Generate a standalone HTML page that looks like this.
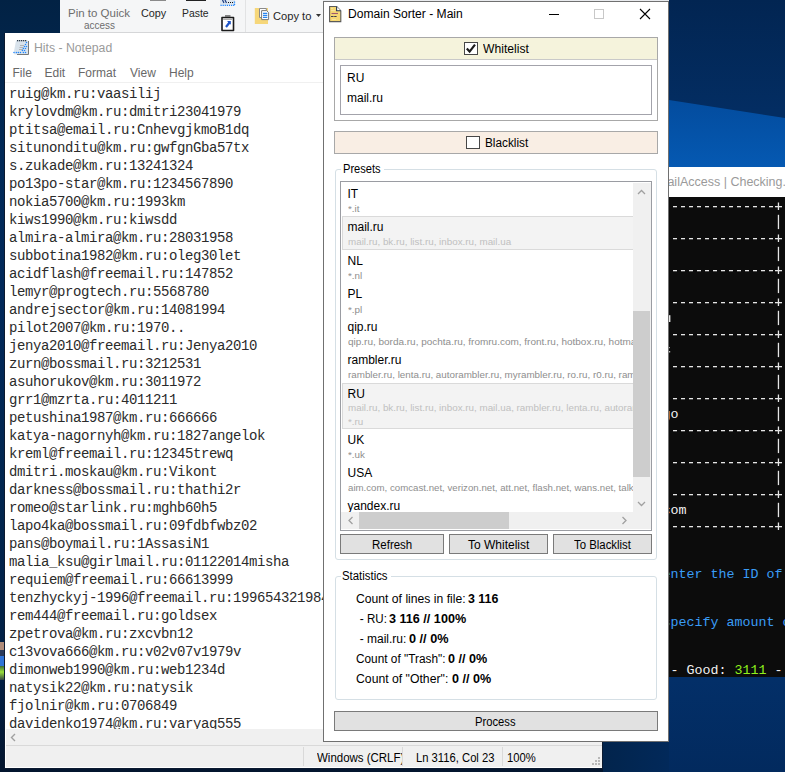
<!DOCTYPE html>
<html><head><meta charset="utf-8">
<style>
*{margin:0;padding:0;box-sizing:border-box}
html,body{width:785px;height:772px;overflow:hidden}
body{position:relative;background:linear-gradient(90deg,rgba(0,0,0,0) 0,rgba(0,0,0,0) 100%),linear-gradient(#022244 0,#022a58 150px,#02295a 300px,#02264f 500px,#021f44 680px,#03152e 772px);font-family:"Liberation Sans",sans-serif;font-size:12px;color:#000}
.a{position:absolute}
.t{position:absolute;white-space:nowrap;line-height:1}
.mono{font-family:"Liberation Mono",monospace}
#deskR{left:669px;top:0;width:116px;height:772px;background:linear-gradient(#022552 0,#032d62 110px,#032d62 170px,#032f68 680px,#022a5e 772px)}
#band{left:669px;top:100px;width:116px;height:67px;background:linear-gradient(#034c9e,#0559b2);clip-path:polygon(0 0,100% 18px,100% 100%,0 100%)}
#ribbon{left:60px;top:0;width:263px;height:33px;background:#f5f6f7;border-bottom:1px solid #d5d6d8}
#np{left:4px;top:33px;width:599px;height:736px;background:#fff;border:1px solid #0c1a30;border-top:none}
#npText{left:9px;top:85px;font-size:14px;letter-spacing:-0.4px;line-height:18px;white-space:pre;color:#2b2b2b}
#npScroll{left:6px;top:729px;width:596px;height:16px;background:#f0f0f0}
#npStatus{left:6px;top:745px;width:596px;height:22px;background:#f0f0f0;border-top:1px solid #d9d9d9}
#ds{left:323px;top:1px;width:346px;height:741px;background:#fff;border:1px solid #707070}
.cb{position:absolute;width:14px;height:13px;border:1px solid #474747;background:#fff}
.btn{position:absolute;background:#e1e1e1;border:1px solid #7a7a7a}
.gb{position:absolute;border:1px solid #d5dfe5;border-radius:3px}
.gbl{position:absolute;background:#fff;width:auto;height:12px}
.sub{color:#a6a6a6;font-size:10px}
.con{font-size:13.33px;line-height:16px;white-space:pre}
</style></head><body>
<div class="a" id="deskR"></div>
<div class="a" style="left:603px;top:700px;width:66px;height:72px;background:linear-gradient(90deg,#02244c,#02295a)"></div>
<div class="a" id="band"></div>
<div class="a" style="left:0;top:642px;width:4px;height:38px;background:linear-gradient(#b08c7a 0,#b08c7a 8px,#2a3a5a 8px,#2a3a5a 14px,#2f74d8 14px,#2f74d8 24px,#3a6a3a 24px,#9adf3a 30px,#344 38px)"></div>
<div class="a" id="ribbon"></div>
<div class="t" style="left:67.56px;top:8px;font-size:11px;transform:scaleX(1.0448);transform-origin:0 0;color:#6d6d6d">Pin to Quick</div>
<div class="t" style="left:83.90px;top:20.4px;font-size:11px;transform:scaleX(0.9029);transform-origin:0 0;color:#6d6d6d">access</div>
<div class="t" style="left:140.50px;top:8px;font-size:11px;transform:scaleX(0.9846);transform-origin:0 0;color:#262626">Copy</div>
<div class="t" style="left:181.86px;top:8px;font-size:11px;transform:scaleX(0.9444);transform-origin:0 0;color:#262626">Paste</div>
<div class="t" style="left:272.70px;top:11.2px;font-size:11px;transform:scaleX(1.0132);transform-origin:0 0;color:#262626">Copy to</div>
<div class="a" style="left:150px;top:0;width:16px;height:1px;background:#8a8a8a"></div>
<div class="a" style="left:186px;top:0;width:20px;height:1px;background:#222"></div>
<svg class="a" style="left:219px;top:0" width="18" height="8"><rect x="1" y="0" width="15" height="5" fill="#dde6ef"/><path d="M1.5 5.3 H15.5" stroke="#1f86ff" stroke-width="1.3" stroke-dasharray="1.2 0.9"/><path d="M15.5 1.5 V5" stroke="#1f86ff" stroke-width="1.3" stroke-dasharray="1.2 1"/><path d="M3.5 0 L5 3 M6 0 L7.5 3" stroke="#1a3a80" stroke-width="1.2"/><path d="M9 2.5 H14" stroke="#111" stroke-width="1.2" stroke-dasharray="1 1"/></svg>
<svg class="a" style="left:219px;top:13px" width="18" height="20"><path d="M3 4.5 H14.5 V17.5 H3 Z" fill="#fff" stroke="#1a1a1a" stroke-width="1.6" stroke-linejoin="round"/><rect x="6" y="2.2" width="5.5" height="1.6" fill="#666"/><path d="M4.2 6.3 H13" stroke="#9a9a9a" stroke-width="1"/><path d="M7 14 L10.5 9.5" stroke="#1f55c8" stroke-width="2.2"/><path d="M8 8 H11.8 V11.8 Z" fill="#1f55c8"/></svg>
<div class="a" style="left:245px;top:0;width:1px;height:32px;background:#e2e3e4"></div>
<svg class="a" style="left:254px;top:7px" width="16" height="18"><rect x="0.8" y="1" width="13.2" height="16" fill="#f6d77a"/><path d="M5.5 1.5 H12.3 V10.5 H5.5 Z" fill="#fff" stroke="#8a8a8a" stroke-width="1"/><path d="M7.6 3.6 H12.6 L14.6 5.6 V12.6 H7.6 Z" fill="#fff" stroke="#7a7a7a" stroke-width="1"/><path d="M9 6.3h4.3M9 8.4h4.3M9 10.4h4.3" stroke="#2a86f0" stroke-width="1.2"/></svg>
<svg class="a" style="left:316px;top:14px" width="6" height="4"><path d="M0 0H5L2.5 3Z" fill="#333"/></svg>
<div class="a" id="np"></div>
<svg class="a" style="left:12px;top:38px" width="19" height="19"><path d="M4 2.5 H16.5 V16.5 H2.5 L1.8 14.5 Z" fill="#d9e3ec"/><path d="M16.5 3 V16.5 H5" stroke="#6b6b6b" stroke-width="0.9" fill="none"/><g fill="#2c3a48"><rect x="5" y="2" width="1.3" height="1.3"/><rect x="7" y="2" width="1.3" height="1.3"/><rect x="9" y="2" width="1.3" height="1.3"/><rect x="11" y="2" width="1.3" height="1.3"/><rect x="13" y="2" width="1.3" height="1.3"/></g><path d="M8 7.5h4M7.5 9.5h4M7 11.5h4" stroke="#a8a8a8" stroke-width="0.8"/><g fill="#1f86ff"><circle cx="14.5" cy="4.5" r="0.75"/><circle cx="13.5" cy="6.4" r="0.75"/><circle cx="12.5" cy="8.4" r="0.75"/><circle cx="14.5" cy="8.4" r="0.75"/><circle cx="11.4" cy="10.4" r="0.75"/><circle cx="13.5" cy="10.4" r="0.75"/><circle cx="10.4" cy="12.4" r="0.75"/><circle cx="12.5" cy="12.4" r="0.75"/><circle cx="2" cy="14.4" r="0.75"/><circle cx="4.4" cy="14.4" r="0.75"/><circle cx="6.4" cy="14.4" r="0.75"/><circle cx="8.5" cy="14.4" r="0.75"/><circle cx="11.4" cy="14.4" r="0.75"/><circle cx="13.5" cy="14.4" r="0.75"/></g></svg>
<div class="t" style="left:33.88px;top:41.7px;font-size:12px;transform:scaleX(1.0200);transform-origin:0 0;color:#9a9a9a">Hits - Notepad</div>
<div class="t" style="left:12.5px;top:66.7px;color:#686868">File</div>
<div class="t" style="left:44.5px;top:66.7px;color:#686868">Edit</div>
<div class="t" style="left:78px;top:66.7px;color:#686868">Format</div>
<div class="t" style="left:130px;top:66.7px;color:#686868">View</div>
<div class="t" style="left:169px;top:66.7px;color:#686868">Help</div>
<div class="a" style="left:5px;top:82px;width:597px;height:1px;background:#f0f0f0"></div>
<div class="a mono" id="npText">ruig@km.ru:vaasilij
krylovdm@km.ru:dmitri23041979
ptitsa@email.ru:CnhevgjkmoB1dq
situnonditu@km.ru:gwfgnGba57tx
s.zukade@km.ru:13241324
po13po-star@km.ru:1234567890
nokia5700@km.ru:1993km
kiws1990@km.ru:kiwsdd
almira-almira@km.ru:28031958
subbotina1982@km.ru:oleg30let
acidflash@freemail.ru:147852
lemyr@progtech.ru:5568780
andrejsector@km.ru:14081994
pilot2007@km.ru:1970..
jenya2010@freemail.ru:Jenya2010
zurn@bossmail.ru:3212531
asuhorukov@km.ru:3011972
grr1@mzrta.ru:4011211
petushina1987@km.ru:666666
katya-nagornyh@km.ru:1827angelok
kreml@freemail.ru:12345trewq
dmitri.moskau@km.ru:Vikont
darkness@bossmail.ru:thathi2r
romeo@starlink.ru:mghb60h5
lapo4ka@bossmail.ru:09fdbfwbz02
pans@boymail.ru:1AssasiN1
malia_ksu@girlmail.ru:01122014misha
requiem@freemail.ru:66613999
tenzhyckyj-1996@freemail.ru:199654321984
rem444@freemail.ru:goldsex
zpetrova@km.ru:zxcvbn12
c13vova666@km.ru:v02v07v1979v
dimonweb1990@km.ru:web1234d
natysik22@km.ru:natysik
fjolnir@km.ru:0706849
davidenko1974@km.ru:varyag555</div>
<div class="a" id="npScroll"></div>
<svg class="a" style="left:10px;top:733px" width="7" height="9"><path d="M5 1 L1.5 4.5 L5 8" stroke="#a0a0a0" stroke-width="1.4" fill="none"/></svg>
<div class="a" id="npStatus"></div>
<div class="a" style="left:303px;top:747px;width:1px;height:19px;background:#d9d9d9"></div>
<div class="a" style="left:402px;top:747px;width:1px;height:19px;background:#d9d9d9"></div>
<div class="a" style="left:502px;top:747px;width:1px;height:19px;background:#d9d9d9"></div>
<div class="t" style="left:317.10px;top:751.7px;font-size:12px;transform:scaleX(0.9560);transform-origin:0 0;">Windows (CRLF)</div>
<div class="a" style="left:402px;top:746px;width:12px;height:21px;background:#f0f0f0"></div>
<div class="a" style="left:402px;top:747px;width:1px;height:19px;background:#d9d9d9"></div>
<div class="t" style="left:415.66px;top:751.7px;font-size:12px;transform:scaleX(0.9361);transform-origin:0 0;">Ln 3116, Col 23</div>
<div class="t" style="left:506.56px;top:751.7px;font-size:12px;transform:scaleX(0.9379);transform-origin:0 0;">100%</div>
<svg class="a" style="left:591px;top:756px" width="10" height="10"><g fill="#b8b8b8"><rect x="7" y="1" width="2" height="2"/><rect x="4" y="4" width="2" height="2"/><rect x="7" y="4" width="2" height="2"/><rect x="1" y="7" width="2" height="2"/><rect x="4" y="7" width="2" height="2"/><rect x="7" y="7" width="2" height="2"/></g></svg>
<div class="a" style="left:323px;top:0;width:346px;height:1px;background:#e9ebee"></div>
<div class="a" id="ds"></div>
<svg class="a" style="left:328px;top:5px" width="15" height="18"><path d="M1.6 1.5 H8.6 L12.8 5.7 V16.6 H1.6 Z" fill="#f6d872" stroke="#5a5a5a" stroke-width="1.1"/><path d="M8.6 1.5 V5.7 H12.8" fill="#fff" stroke="#2a3a50" stroke-width="1.1"/><g fill="#fff" opacity="0.8"><circle cx="4" cy="3.5" r="0.5"/><circle cx="4" cy="5.5" r="0.5"/><circle cx="6" cy="5.5" r="0.5"/><circle cx="5" cy="14.5" r="0.5"/><circle cx="7" cy="14.5" r="0.5"/></g><path d="M3.5 8.5h6.5" stroke="#a05a70" stroke-width="1.1"/><path d="M3 11.5h2.6M6.2 11.5h2.4" stroke="#3a3a50" stroke-width="1"/></svg>
<div class="t" style="left:347.59px;top:7.800000000000001px;font-size:12px;transform:scaleX(1.0063);transform-origin:0 0;">Domain Sorter - Main</div>
<div class="a" style="left:549px;top:14px;width:10px;height:1px;background:#000"></div>
<div class="a" style="left:594px;top:9px;width:10px;height:10px;border:1px solid #c8c8c8"></div>
<svg class="a" style="left:639px;top:8px" width="12" height="12"><path d="M1 1L11 11M11 1L1 11" stroke="#000" stroke-width="1.1"/></svg>
<div class="a" style="left:334px;top:37px;width:324px;height:84px;border:1px solid #a8a8a8;background:#fff"></div>
<div class="a" style="left:335px;top:38px;width:322px;height:22px;background:#f5f3dc;border-bottom:1px solid #c9c9c9"></div>
<div class="cb" style="left:464px;top:42px"></div>
<svg class="a" style="left:465px;top:43px" width="12" height="11"><path d="M1.8 5.6 L4.6 8.6 L10 1.6" stroke="#1c1c1c" stroke-width="2.2" fill="none"/></svg>
<div class="t" style="left:483.40px;top:42.7px;font-size:12px;transform:scaleX(1.0111);transform-origin:0 0;">Whitelist</div>
<div class="a" style="left:340px;top:65px;width:312px;height:50px;border:1px solid #a3a3ab"></div>
<div class="t" style="left:347px;top:72px;">RU</div>
<div class="t" style="left:347px;top:92px;">mail.ru</div>
<div class="a" style="left:334px;top:131px;width:324px;height:23px;border:1px solid #a8a8a8;background:#f9eee4"></div>
<div class="cb" style="left:466px;top:136px"></div>
<div class="t" style="left:485.02px;top:137px;font-size:12px;transform:scaleX(0.9814);transform-origin:0 0;">Blacklist</div>
<div class="gb" style="left:335px;top:169px;width:322px;height:391px"></div>
<div class="a" style="left:341px;top:163px;width:43px;height:12px;background:#fff"></div>
<div class="t" style="left:342.57px;top:162.7px;font-size:12px;transform:scaleX(0.9250);transform-origin:0 0;">Presets</div>
<div class="a" style="left:340px;top:181px;width:312px;height:350px;border:1px solid #9a9ca2;background:#fff"></div>
<div class="a" style="left:341px;top:182px;width:292px;height:330px;overflow:hidden">
<div class="t" style="left:6.5px;top:5.900000000000006px;">IT</div>
<div class="t" style="left:6.5px;top:23.100000000000005px;color:#8e8e8e;font-size:9.3px;transform:scaleX(1.056);transform-origin:0 0">*.it</div>
<div class="a" style="left:1px;top:34px;width:300px;height:34px;background:#f3f3f3;border:1px solid #dadada"></div>
<div class="t" style="left:6.5px;top:38.80000000000001px;">mail.ru</div>
<div class="t" style="left:6.5px;top:56.000000000000014px;color:#c0c0c0;font-size:9.3px;transform:scaleX(1.056);transform-origin:0 0">mail.ru, bk.ru, list.ru, inbox.ru, mail.ua</div>
<div class="t" style="left:6.5px;top:73.19999999999999px;">NL</div>
<div class="t" style="left:6.5px;top:90.39999999999999px;color:#8e8e8e;font-size:9.3px;transform:scaleX(1.056);transform-origin:0 0">*.nl</div>
<div class="t" style="left:6.5px;top:106.30000000000001px;">PL</div>
<div class="t" style="left:6.5px;top:123.50000000000001px;color:#8e8e8e;font-size:9.3px;transform:scaleX(1.056);transform-origin:0 0">*.pl</div>
<div class="t" style="left:6.5px;top:138.89999999999998px;">qip.ru</div>
<div class="t" style="left:6.5px;top:156.09999999999997px;color:#8e8e8e;font-size:9.3px;transform:scaleX(1.073);transform-origin:0 0">qip.ru, borda.ru, pochta.ru, fromru.com, front.ru, hotbox.ru, hotmail.ru, krovatka.su</div>
<div class="t" style="left:6.5px;top:171.5px;">rambler.ru</div>
<div class="t" style="left:6.5px;top:188.7px;color:#8e8e8e;font-size:9.3px;transform:scaleX(1.056);transform-origin:0 0">rambler.ru, lenta.ru, autorambler.ru, myrambler.ru, ro.ru, r0.ru, rambler.ua</div>
<div class="a" style="left:1px;top:201px;width:300px;height:46px;background:#f3f3f3;border:1px solid #dadada"></div>
<div class="t" style="left:6.5px;top:205.60000000000002px;">RU</div>
<div class="t" style="left:6.5px;top:222.10000000000002px;color:#c0c0c0;font-size:9.3px;transform:scaleX(1.056);transform-origin:0 0">mail.ru, bk.ru, list.ru, inbox.ru, mail.ua, rambler.ru, lenta.ru, autorambler.ru</div>
<div class="t" style="left:6.5px;top:236.20000000000002px;color:#c0c0c0;font-size:9.3px;transform:scaleX(1.056);transform-origin:0 0">*.ru</div>
<div class="t" style="left:6.5px;top:251.7px;">UK</div>
<div class="t" style="left:6.5px;top:268.9px;color:#8e8e8e;font-size:9.3px;transform:scaleX(1.056);transform-origin:0 0">*.uk</div>
<div class="t" style="left:6.5px;top:284.9px;">USA</div>
<div class="t" style="left:6.5px;top:302.09999999999997px;color:#8e8e8e;font-size:9.3px;transform:scaleX(1.041);transform-origin:0 0">aim.com, comcast.net, verizon.net, att.net, flash.net, wans.net, talk21.com</div>
<div class="t" style="left:6.5px;top:317.8px;">yandex.ru</div>
<div class="t" style="left:6.5px;top:335.0px;color:#8e8e8e;font-size:9.3px;transform:scaleX(1.056);transform-origin:0 0">yandex.ru, ya.ru</div>
</div>
<div class="a" style="left:633px;top:183px;width:18px;height:329px;background:#f0f0f0"></div>
<div class="a" style="left:633px;top:311px;width:17px;height:166px;background:#cdcdcd"></div>
<svg class="a" style="left:637px;top:189px" width="10" height="6"><path d="M1 5 L4.5 1.5 L8 5" stroke="#a0a0a0" stroke-width="1.3" fill="none"/></svg>
<svg class="a" style="left:637px;top:501px" width="10" height="6"><path d="M1 1 L4.5 4.5 L8 1" stroke="#a0a0a0" stroke-width="1.3" fill="none"/></svg>
<div class="a" style="left:341px;top:512px;width:310px;height:17px;background:#f0f0f0"></div>
<div class="a" style="left:359px;top:512px;width:150px;height:17px;background:#cdcdcd"></div>
<svg class="a" style="left:347px;top:516px" width="7" height="10"><path d="M5.5 1 L2 4.5 L5.5 8" stroke="#a0a0a0" stroke-width="1.3" fill="none"/></svg>
<svg class="a" style="left:621px;top:516px" width="7" height="10"><path d="M1.5 1 L5 4.5 L1.5 8" stroke="#a0a0a0" stroke-width="1.3" fill="none"/></svg>
<div class="btn" style="left:340px;top:534px;width:104px;height:20px"></div>
<div class="t" style="left:371.84px;top:538.5px;font-size:12px;transform:scaleX(0.9575);transform-origin:0 0;">Refresh</div>
<div class="btn" style="left:449px;top:534px;width:99px;height:20px"></div>
<div class="t" style="left:468.00px;top:538.5px;font-size:12px;transform:scaleX(1.0000);transform-origin:0 0;">To Whitelist</div>
<div class="btn" style="left:553px;top:534px;width:99px;height:20px"></div>
<div class="t" style="left:574.10px;top:538.5px;font-size:12px;transform:scaleX(0.9483);transform-origin:0 0;">To Blacklist</div>
<div class="gb" style="left:335px;top:576px;width:322px;height:124px"></div>
<div class="a" style="left:341px;top:570px;width:50px;height:12px;background:#fff"></div>
<div class="t" style="left:342.45px;top:569.5px;font-size:12px;transform:scaleX(0.9489);transform-origin:0 0;">Statistics</div>
<div class="t" style="left:356.10px;top:593.3px;font-size:12px;transform:scaleX(1.0140);transform-origin:0 0;color:#000">Count of lines in file:</div>
<div class="t" style="left:467.80px;top:593.3px;font-size:12px;font-weight:bold;transform:scaleX(1.0345);transform-origin:0 0;color:#000">3 116</div>
<div class="t" style="left:359.80px;top:613.2px;font-size:12px;transform:scaleX(1.0000);transform-origin:0 0;color:#000">-</div>
<div class="t" style="left:367.04px;top:613.2px;font-size:12px;transform:scaleX(0.9632);transform-origin:0 0;color:#000">RU:</div>
<div class="t" style="left:389.10px;top:613.2px;font-size:12px;font-weight:bold;transform:scaleX(1.0507);transform-origin:0 0;color:#000">3 116 // 100%</div>
<div class="t" style="left:359.80px;top:633.2px;font-size:12px;transform:scaleX(1.0000);transform-origin:0 0;color:#000">-</div>
<div class="t" style="left:367.00px;top:633.2px;font-size:12px;transform:scaleX(1.0000);transform-origin:0 0;color:#000">mail.ru:</div>
<div class="t" style="left:409.10px;top:633.2px;font-size:12px;font-weight:bold;transform:scaleX(1.0568);transform-origin:0 0;color:#000">0 // 0%</div>
<div class="t" style="left:356.10px;top:653px;font-size:12px;transform:scaleX(0.9856);transform-origin:0 0;color:#000">Count of &quot;Trash&quot;:</div>
<div class="t" style="left:448.20px;top:653px;font-size:12px;font-weight:bold;transform:scaleX(1.0486);transform-origin:0 0;color:#000">0 // 0%</div>
<div class="t" style="left:356.10px;top:672.7px;font-size:12px;transform:scaleX(1.0189);transform-origin:0 0;color:#000">Count of &quot;Other&quot;:</div>
<div class="t" style="left:451.50px;top:672.7px;font-size:12px;font-weight:bold;transform:scaleX(1.0459);transform-origin:0 0;color:#000">0 // 0%</div>
<div class="btn" style="left:334px;top:711px;width:324px;height:20px"></div>
<div class="t" style="left:475.46px;top:715.6px;font-size:12px;transform:scaleX(0.9357);transform-origin:0 0;">Process</div>
<div class="a" style="left:669px;top:167px;width:116px;height:30px;background:#fff;overflow:hidden"><div class="t" style="left:-12px;top:8.7px;color:#9a9a9a;font-size:12.5px">MailAccess | Checking...</div></div>
<div class="a" style="left:669px;top:197px;width:116px;height:480px;background:#0c0c0c;overflow:hidden"><svg class="a" style="left:0;top:0" width="116" height="480"><rect x="-4.0" y="9" width="4" height="1.3" fill="#e6e6e6"/><rect x="4.0" y="9" width="4" height="1.3" fill="#e6e6e6"/><rect x="12.0" y="9" width="4" height="1.3" fill="#e6e6e6"/><rect x="20.0" y="9" width="4" height="1.3" fill="#e6e6e6"/><rect x="28.0" y="9" width="4" height="1.3" fill="#e6e6e6"/><rect x="36.0" y="9" width="4" height="1.3" fill="#e6e6e6"/><rect x="44.0" y="9" width="4" height="1.3" fill="#e6e6e6"/><rect x="52.0" y="9" width="4" height="1.3" fill="#e6e6e6"/><rect x="60.0" y="9" width="4" height="1.3" fill="#e6e6e6"/><rect x="68.0" y="9" width="4" height="1.3" fill="#e6e6e6"/><rect x="76.0" y="9" width="4" height="1.3" fill="#e6e6e6"/><rect x="84.0" y="9" width="4" height="1.3" fill="#e6e6e6"/><rect x="92.0" y="9" width="4" height="1.3" fill="#e6e6e6"/><rect x="100.0" y="9" width="4" height="1.3" fill="#e6e6e6"/><rect x="106" y="9" width="7" height="1.3" fill="#e6e6e6"/><rect x="108.8" y="5.5" width="1.3" height="7.5" fill="#e6e6e6"/><rect x="-4.0" y="41" width="4" height="1.3" fill="#e6e6e6"/><rect x="4.0" y="41" width="4" height="1.3" fill="#e6e6e6"/><rect x="12.0" y="41" width="4" height="1.3" fill="#e6e6e6"/><rect x="20.0" y="41" width="4" height="1.3" fill="#e6e6e6"/><rect x="28.0" y="41" width="4" height="1.3" fill="#e6e6e6"/><rect x="36.0" y="41" width="4" height="1.3" fill="#e6e6e6"/><rect x="44.0" y="41" width="4" height="1.3" fill="#e6e6e6"/><rect x="52.0" y="41" width="4" height="1.3" fill="#e6e6e6"/><rect x="60.0" y="41" width="4" height="1.3" fill="#e6e6e6"/><rect x="68.0" y="41" width="4" height="1.3" fill="#e6e6e6"/><rect x="76.0" y="41" width="4" height="1.3" fill="#e6e6e6"/><rect x="84.0" y="41" width="4" height="1.3" fill="#e6e6e6"/><rect x="92.0" y="41" width="4" height="1.3" fill="#e6e6e6"/><rect x="100.0" y="41" width="4" height="1.3" fill="#e6e6e6"/><rect x="106" y="41" width="7" height="1.3" fill="#e6e6e6"/><rect x="108.8" y="37.5" width="1.3" height="7.5" fill="#e6e6e6"/><rect x="-4.0" y="73" width="4" height="1.3" fill="#e6e6e6"/><rect x="4.0" y="73" width="4" height="1.3" fill="#e6e6e6"/><rect x="12.0" y="73" width="4" height="1.3" fill="#e6e6e6"/><rect x="20.0" y="73" width="4" height="1.3" fill="#e6e6e6"/><rect x="28.0" y="73" width="4" height="1.3" fill="#e6e6e6"/><rect x="36.0" y="73" width="4" height="1.3" fill="#e6e6e6"/><rect x="44.0" y="73" width="4" height="1.3" fill="#e6e6e6"/><rect x="52.0" y="73" width="4" height="1.3" fill="#e6e6e6"/><rect x="60.0" y="73" width="4" height="1.3" fill="#e6e6e6"/><rect x="68.0" y="73" width="4" height="1.3" fill="#e6e6e6"/><rect x="76.0" y="73" width="4" height="1.3" fill="#e6e6e6"/><rect x="84.0" y="73" width="4" height="1.3" fill="#e6e6e6"/><rect x="92.0" y="73" width="4" height="1.3" fill="#e6e6e6"/><rect x="100.0" y="73" width="4" height="1.3" fill="#e6e6e6"/><rect x="106" y="73" width="7" height="1.3" fill="#e6e6e6"/><rect x="108.8" y="69.5" width="1.3" height="7.5" fill="#e6e6e6"/><rect x="-4.0" y="105" width="4" height="1.3" fill="#e6e6e6"/><rect x="4.0" y="105" width="4" height="1.3" fill="#e6e6e6"/><rect x="12.0" y="105" width="4" height="1.3" fill="#e6e6e6"/><rect x="20.0" y="105" width="4" height="1.3" fill="#e6e6e6"/><rect x="28.0" y="105" width="4" height="1.3" fill="#e6e6e6"/><rect x="36.0" y="105" width="4" height="1.3" fill="#e6e6e6"/><rect x="44.0" y="105" width="4" height="1.3" fill="#e6e6e6"/><rect x="52.0" y="105" width="4" height="1.3" fill="#e6e6e6"/><rect x="60.0" y="105" width="4" height="1.3" fill="#e6e6e6"/><rect x="68.0" y="105" width="4" height="1.3" fill="#e6e6e6"/><rect x="76.0" y="105" width="4" height="1.3" fill="#e6e6e6"/><rect x="84.0" y="105" width="4" height="1.3" fill="#e6e6e6"/><rect x="92.0" y="105" width="4" height="1.3" fill="#e6e6e6"/><rect x="100.0" y="105" width="4" height="1.3" fill="#e6e6e6"/><rect x="106" y="105" width="7" height="1.3" fill="#e6e6e6"/><rect x="108.8" y="101.5" width="1.3" height="7.5" fill="#e6e6e6"/><rect x="-4.0" y="137" width="4" height="1.3" fill="#e6e6e6"/><rect x="4.0" y="137" width="4" height="1.3" fill="#e6e6e6"/><rect x="12.0" y="137" width="4" height="1.3" fill="#e6e6e6"/><rect x="20.0" y="137" width="4" height="1.3" fill="#e6e6e6"/><rect x="28.0" y="137" width="4" height="1.3" fill="#e6e6e6"/><rect x="36.0" y="137" width="4" height="1.3" fill="#e6e6e6"/><rect x="44.0" y="137" width="4" height="1.3" fill="#e6e6e6"/><rect x="52.0" y="137" width="4" height="1.3" fill="#e6e6e6"/><rect x="60.0" y="137" width="4" height="1.3" fill="#e6e6e6"/><rect x="68.0" y="137" width="4" height="1.3" fill="#e6e6e6"/><rect x="76.0" y="137" width="4" height="1.3" fill="#e6e6e6"/><rect x="84.0" y="137" width="4" height="1.3" fill="#e6e6e6"/><rect x="92.0" y="137" width="4" height="1.3" fill="#e6e6e6"/><rect x="100.0" y="137" width="4" height="1.3" fill="#e6e6e6"/><rect x="106" y="137" width="7" height="1.3" fill="#e6e6e6"/><rect x="108.8" y="133.5" width="1.3" height="7.5" fill="#e6e6e6"/><rect x="-4.0" y="169" width="4" height="1.3" fill="#e6e6e6"/><rect x="4.0" y="169" width="4" height="1.3" fill="#e6e6e6"/><rect x="12.0" y="169" width="4" height="1.3" fill="#e6e6e6"/><rect x="20.0" y="169" width="4" height="1.3" fill="#e6e6e6"/><rect x="28.0" y="169" width="4" height="1.3" fill="#e6e6e6"/><rect x="36.0" y="169" width="4" height="1.3" fill="#e6e6e6"/><rect x="44.0" y="169" width="4" height="1.3" fill="#e6e6e6"/><rect x="52.0" y="169" width="4" height="1.3" fill="#e6e6e6"/><rect x="60.0" y="169" width="4" height="1.3" fill="#e6e6e6"/><rect x="68.0" y="169" width="4" height="1.3" fill="#e6e6e6"/><rect x="76.0" y="169" width="4" height="1.3" fill="#e6e6e6"/><rect x="84.0" y="169" width="4" height="1.3" fill="#e6e6e6"/><rect x="92.0" y="169" width="4" height="1.3" fill="#e6e6e6"/><rect x="100.0" y="169" width="4" height="1.3" fill="#e6e6e6"/><rect x="106" y="169" width="7" height="1.3" fill="#e6e6e6"/><rect x="108.8" y="165.5" width="1.3" height="7.5" fill="#e6e6e6"/><rect x="-4.0" y="201" width="4" height="1.3" fill="#e6e6e6"/><rect x="4.0" y="201" width="4" height="1.3" fill="#e6e6e6"/><rect x="12.0" y="201" width="4" height="1.3" fill="#e6e6e6"/><rect x="20.0" y="201" width="4" height="1.3" fill="#e6e6e6"/><rect x="28.0" y="201" width="4" height="1.3" fill="#e6e6e6"/><rect x="36.0" y="201" width="4" height="1.3" fill="#e6e6e6"/><rect x="44.0" y="201" width="4" height="1.3" fill="#e6e6e6"/><rect x="52.0" y="201" width="4" height="1.3" fill="#e6e6e6"/><rect x="60.0" y="201" width="4" height="1.3" fill="#e6e6e6"/><rect x="68.0" y="201" width="4" height="1.3" fill="#e6e6e6"/><rect x="76.0" y="201" width="4" height="1.3" fill="#e6e6e6"/><rect x="84.0" y="201" width="4" height="1.3" fill="#e6e6e6"/><rect x="92.0" y="201" width="4" height="1.3" fill="#e6e6e6"/><rect x="100.0" y="201" width="4" height="1.3" fill="#e6e6e6"/><rect x="106" y="201" width="7" height="1.3" fill="#e6e6e6"/><rect x="108.8" y="197.5" width="1.3" height="7.5" fill="#e6e6e6"/><rect x="-4.0" y="233" width="4" height="1.3" fill="#e6e6e6"/><rect x="4.0" y="233" width="4" height="1.3" fill="#e6e6e6"/><rect x="12.0" y="233" width="4" height="1.3" fill="#e6e6e6"/><rect x="20.0" y="233" width="4" height="1.3" fill="#e6e6e6"/><rect x="28.0" y="233" width="4" height="1.3" fill="#e6e6e6"/><rect x="36.0" y="233" width="4" height="1.3" fill="#e6e6e6"/><rect x="44.0" y="233" width="4" height="1.3" fill="#e6e6e6"/><rect x="52.0" y="233" width="4" height="1.3" fill="#e6e6e6"/><rect x="60.0" y="233" width="4" height="1.3" fill="#e6e6e6"/><rect x="68.0" y="233" width="4" height="1.3" fill="#e6e6e6"/><rect x="76.0" y="233" width="4" height="1.3" fill="#e6e6e6"/><rect x="84.0" y="233" width="4" height="1.3" fill="#e6e6e6"/><rect x="92.0" y="233" width="4" height="1.3" fill="#e6e6e6"/><rect x="100.0" y="233" width="4" height="1.3" fill="#e6e6e6"/><rect x="106" y="233" width="7" height="1.3" fill="#e6e6e6"/><rect x="108.8" y="229.5" width="1.3" height="7.5" fill="#e6e6e6"/><rect x="-4.0" y="265" width="4" height="1.3" fill="#e6e6e6"/><rect x="4.0" y="265" width="4" height="1.3" fill="#e6e6e6"/><rect x="12.0" y="265" width="4" height="1.3" fill="#e6e6e6"/><rect x="20.0" y="265" width="4" height="1.3" fill="#e6e6e6"/><rect x="28.0" y="265" width="4" height="1.3" fill="#e6e6e6"/><rect x="36.0" y="265" width="4" height="1.3" fill="#e6e6e6"/><rect x="44.0" y="265" width="4" height="1.3" fill="#e6e6e6"/><rect x="52.0" y="265" width="4" height="1.3" fill="#e6e6e6"/><rect x="60.0" y="265" width="4" height="1.3" fill="#e6e6e6"/><rect x="68.0" y="265" width="4" height="1.3" fill="#e6e6e6"/><rect x="76.0" y="265" width="4" height="1.3" fill="#e6e6e6"/><rect x="84.0" y="265" width="4" height="1.3" fill="#e6e6e6"/><rect x="92.0" y="265" width="4" height="1.3" fill="#e6e6e6"/><rect x="100.0" y="265" width="4" height="1.3" fill="#e6e6e6"/><rect x="106" y="265" width="7" height="1.3" fill="#e6e6e6"/><rect x="108.8" y="261.5" width="1.3" height="7.5" fill="#e6e6e6"/><rect x="-4.0" y="297" width="4" height="1.3" fill="#e6e6e6"/><rect x="4.0" y="297" width="4" height="1.3" fill="#e6e6e6"/><rect x="12.0" y="297" width="4" height="1.3" fill="#e6e6e6"/><rect x="20.0" y="297" width="4" height="1.3" fill="#e6e6e6"/><rect x="28.0" y="297" width="4" height="1.3" fill="#e6e6e6"/><rect x="36.0" y="297" width="4" height="1.3" fill="#e6e6e6"/><rect x="44.0" y="297" width="4" height="1.3" fill="#e6e6e6"/><rect x="52.0" y="297" width="4" height="1.3" fill="#e6e6e6"/><rect x="60.0" y="297" width="4" height="1.3" fill="#e6e6e6"/><rect x="68.0" y="297" width="4" height="1.3" fill="#e6e6e6"/><rect x="76.0" y="297" width="4" height="1.3" fill="#e6e6e6"/><rect x="84.0" y="297" width="4" height="1.3" fill="#e6e6e6"/><rect x="92.0" y="297" width="4" height="1.3" fill="#e6e6e6"/><rect x="100.0" y="297" width="4" height="1.3" fill="#e6e6e6"/><rect x="106" y="297" width="7" height="1.3" fill="#e6e6e6"/><rect x="108.8" y="293.5" width="1.3" height="7.5" fill="#e6e6e6"/><rect x="-4.0" y="329" width="4" height="1.3" fill="#e6e6e6"/><rect x="4.0" y="329" width="4" height="1.3" fill="#e6e6e6"/><rect x="12.0" y="329" width="4" height="1.3" fill="#e6e6e6"/><rect x="20.0" y="329" width="4" height="1.3" fill="#e6e6e6"/><rect x="28.0" y="329" width="4" height="1.3" fill="#e6e6e6"/><rect x="36.0" y="329" width="4" height="1.3" fill="#e6e6e6"/><rect x="44.0" y="329" width="4" height="1.3" fill="#e6e6e6"/><rect x="52.0" y="329" width="4" height="1.3" fill="#e6e6e6"/><rect x="60.0" y="329" width="4" height="1.3" fill="#e6e6e6"/><rect x="68.0" y="329" width="4" height="1.3" fill="#e6e6e6"/><rect x="76.0" y="329" width="4" height="1.3" fill="#e6e6e6"/><rect x="84.0" y="329" width="4" height="1.3" fill="#e6e6e6"/><rect x="92.0" y="329" width="4" height="1.3" fill="#e6e6e6"/><rect x="100.0" y="329" width="4" height="1.3" fill="#e6e6e6"/><rect x="106" y="329" width="7" height="1.3" fill="#e6e6e6"/><rect x="108.8" y="325.5" width="1.3" height="7.5" fill="#e6e6e6"/><rect x="108.8" y="17.8" width="1.3" height="14.3" fill="#e6e6e6"/><rect x="108.8" y="49.8" width="1.3" height="14.3" fill="#e6e6e6"/><rect x="108.8" y="81.8" width="1.3" height="14.3" fill="#e6e6e6"/><rect x="108.8" y="113.8" width="1.3" height="14.3" fill="#e6e6e6"/><rect x="108.8" y="145.8" width="1.3" height="14.3" fill="#e6e6e6"/><rect x="108.8" y="177.8" width="1.3" height="14.3" fill="#e6e6e6"/><rect x="108.8" y="209.8" width="1.3" height="14.3" fill="#e6e6e6"/><rect x="108.8" y="241.8" width="1.3" height="14.3" fill="#e6e6e6"/><rect x="108.8" y="273.8" width="1.3" height="14.3" fill="#e6e6e6"/><rect x="108.8" y="305.8" width="1.3" height="14.3" fill="#e6e6e6"/><rect x="0" y="118.2" width="1.4" height="6.8" fill="#e6e6e6"/><rect x="0" y="150" width="1" height="1.2" fill="#999"/><rect x="0" y="154" width="1.2" height="1.5" fill="#bbb"/></svg><div class="a mono con" style="left:-6.4px;top:210px;color:#f2f2f2">go</div><div class="a mono con" style="left:-6.4px;top:306px;color:#f2f2f2">com</div><div class="a mono con" style="left:-6.4px;top:370px;color:#3a9cf6">enter the ID of</div><div class="a mono con" style="left:-6.4px;top:418px;color:#3a9cf6">specify amount of</div><div class="a mono con" style="left:-6.4px;top:466px;color:#f2f2f2"> - Good: <span style="color:#90f01c">3111</span> -</div></div>
</body></html>
